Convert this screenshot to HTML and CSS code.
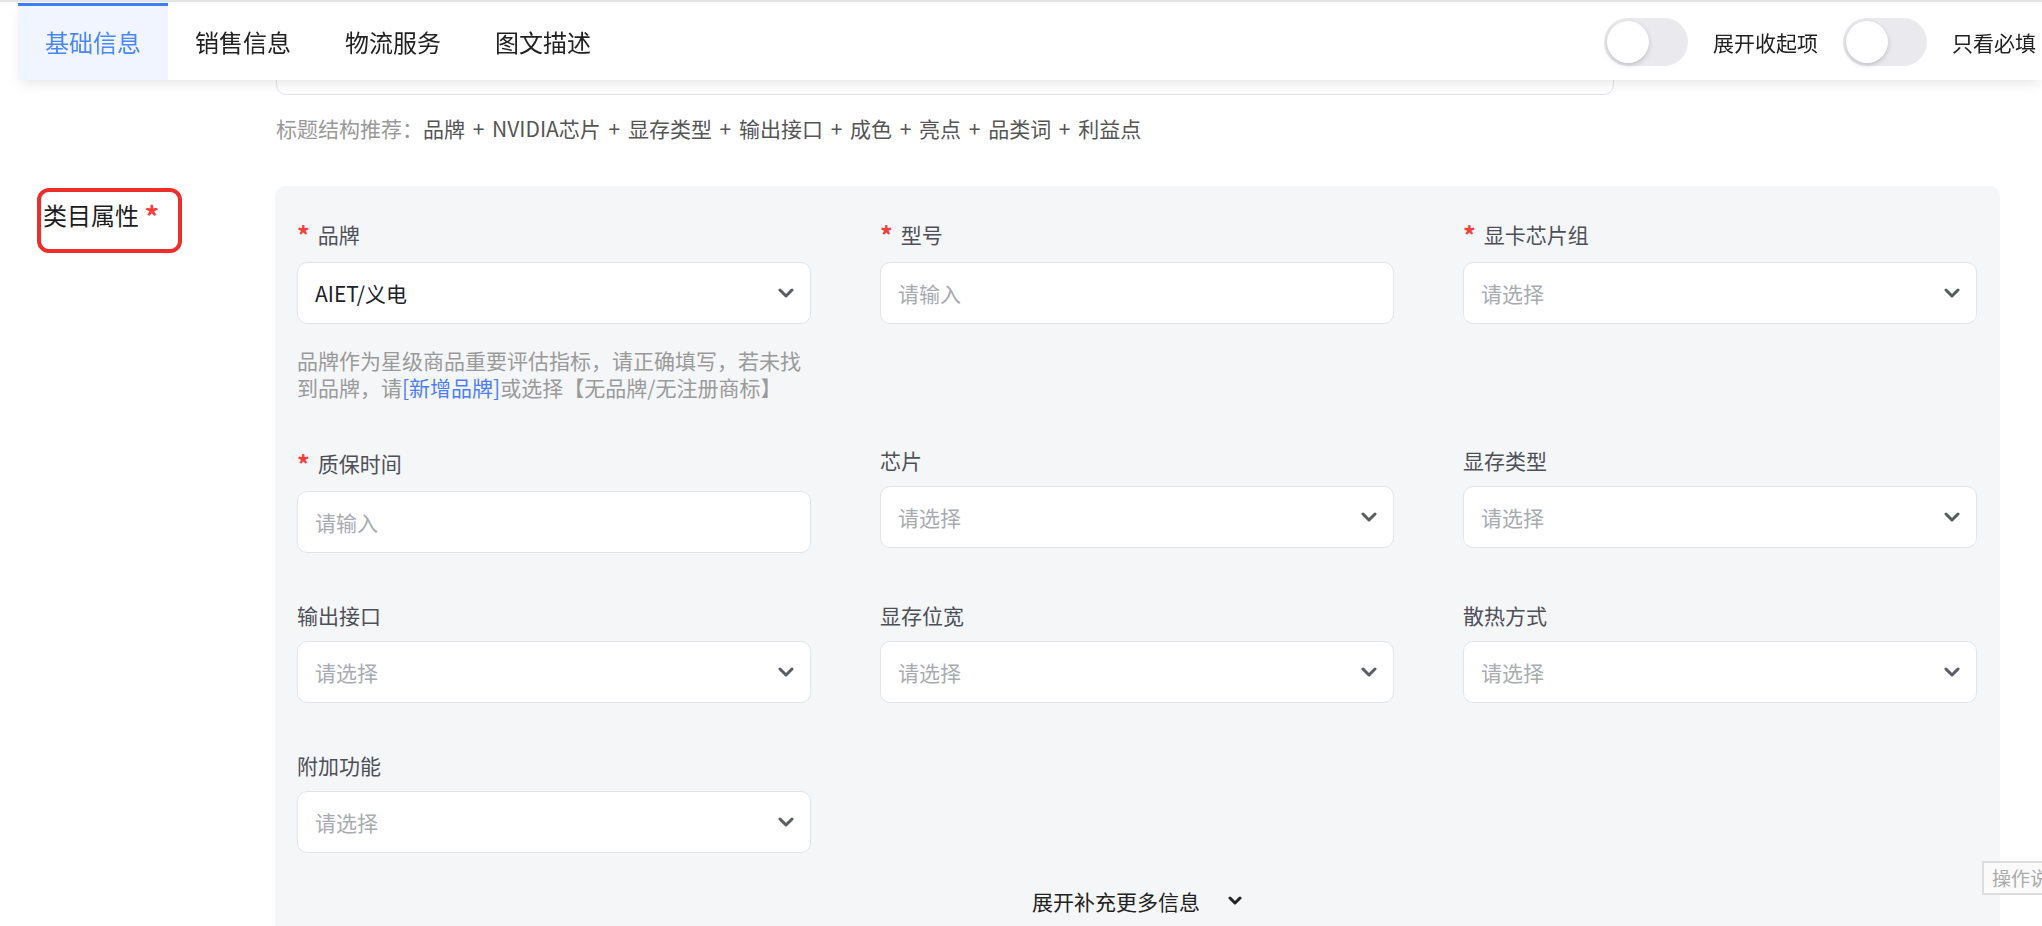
FILE: index.html
```html
<!DOCTYPE html>
<html lang="zh-CN">
<head>
    <meta charset="UTF-8">
    <meta name="viewport" content="width=device-width, initial-scale=1.0">
    <title>商品发布 - 基础信息</title>
    <link rel="stylesheet" href="styles.css">
</head>
<body>
    <!-- 顶部吸顶导航 -->
    <header class="tabbar">
        <nav class="tabs">
            <a class="tab active">基础信息</a>
            <a class="tab">销售信息</a>
            <a class="tab">物流服务</a>
            <a class="tab">图文描述</a>
        </nav>
        <div class="switches">
            <span class="switch"><span class="knob"></span></span>
            <span class="switch-text">展开收起项</span>
            <span class="switch"><span class="knob"></span></span>
            <span class="switch-text">只看必填</span>
        </div>
    </header>

    <main class="page">
        <div class="title-block">
            <div class="title-input"></div>
            <p class="title-tip"><span class="tip-lead">标题结构推荐：</span>品牌 + NVIDIA芯片 + 显存类型 + 输出接口 + 成色 + 亮点 + 品类词 + 利益点</p>
        </div>

        <section class="form-row">
            <div class="row-label">类目属性 <span class="star">*</span></div>

            <div class="attr-panel">
                <div class="attr-grid">
                    <div class="field">
                        <div class="field-label required"><span class="star">*</span>品牌</div>
                        <div class="control">
                            <span class="value">AIET/义电</span>
                            <svg class="arrow" width="16" height="10" viewBox="0 0 16 10"><path d="M2 2 L8 8 L14 2" /></svg>
                        </div>
                        <p class="field-tip">品牌作为星级商品重要评估指标，请正确填写，若未找到品牌，请<a class="link">[新增品牌]</a>或选择【无品牌/无注册商标】</p>
                    </div>
                    <div class="field">
                        <div class="field-label required"><span class="star">*</span>型号</div>
                        <div class="control">
                            <span class="placeholder">请输入</span>
                        </div>
                    </div>
                    <div class="field">
                        <div class="field-label required"><span class="star">*</span>显卡芯片组</div>
                        <div class="control">
                            <span class="placeholder">请选择</span>
                            <svg class="arrow" width="16" height="10" viewBox="0 0 16 10"><path d="M2 2 L8 8 L14 2" /></svg>
                        </div>
                    </div>

                    <div class="field">
                        <div class="field-label required"><span class="star">*</span>质保时间</div>
                        <div class="control">
                            <span class="placeholder">请输入</span>
                        </div>
                    </div>
                    <div class="field">
                        <div class="field-label">芯片</div>
                        <div class="control">
                            <span class="placeholder">请选择</span>
                            <svg class="arrow" width="16" height="10" viewBox="0 0 16 10"><path d="M2 2 L8 8 L14 2" /></svg>
                        </div>
                    </div>
                    <div class="field">
                        <div class="field-label">显存类型</div>
                        <div class="control">
                            <span class="placeholder">请选择</span>
                            <svg class="arrow" width="16" height="10" viewBox="0 0 16 10"><path d="M2 2 L8 8 L14 2" /></svg>
                        </div>
                    </div>

                    <div class="field">
                        <div class="field-label">输出接口</div>
                        <div class="control">
                            <span class="placeholder">请选择</span>
                            <svg class="arrow" width="16" height="10" viewBox="0 0 16 10"><path d="M2 2 L8 8 L14 2" /></svg>
                        </div>
                    </div>
                    <div class="field">
                        <div class="field-label">显存位宽</div>
                        <div class="control">
                            <span class="placeholder">请选择</span>
                            <svg class="arrow" width="16" height="10" viewBox="0 0 16 10"><path d="M2 2 L8 8 L14 2" /></svg>
                        </div>
                    </div>
                    <div class="field">
                        <div class="field-label">散热方式</div>
                        <div class="control">
                            <span class="placeholder">请选择</span>
                            <svg class="arrow" width="16" height="10" viewBox="0 0 16 10"><path d="M2 2 L8 8 L14 2" /></svg>
                        </div>
                    </div>

                    <div class="field">
                        <div class="field-label">附加功能</div>
                        <div class="control">
                            <span class="placeholder">请选择</span>
                            <svg class="arrow" width="16" height="10" viewBox="0 0 16 10"><path d="M2 2 L8 8 L14 2" /></svg>
                        </div>
                    </div>
                </div>

                <div class="expand-more">
                    展开补充更多信息
                    <svg class="expand-arrow" width="14" height="10" viewBox="0 0 14 10"><path d="M2 2 L7 7 L12 2" /></svg>
                </div>
            </div>
        </section>
    </main>

    <!-- 右侧悬浮入口 -->
    <div class="float-help">操作说明</div>
</body>
</html>
```

FILE: styles.css
```css
body {
    margin: 0;
    border-top: 2px solid #e4e4e6;
    background-color: #ffffff;
    font-family: "Noto Sans CJK SC", sans-serif;
    color: #1f2329;
    overflow: hidden;
}

/* 顶部导航 */
.tabbar {
    position: fixed;
    top: 3px;
    left: 18px;
    right: 0;
    height: 77px;
    display: flex;
    background: #ffffff;
    box-shadow: 0 6px 12px -3px rgba(0, 0, 0, 0.1);
    z-index: 10;
}
.tabs {
    display: flex;
}
.tab {
    padding: 0 27px;
    border-top: 3px solid transparent;
    font-size: 24px;
    line-height: 72px;
    color: #222222;
    cursor: pointer;
}
.tab.active {
    border-top-color: #3d7fff;
    background-color: #f0f5ff;
    color: #4a86ff;
}
.switches {
    margin-left: auto;
    display: flex;
    align-items: center;
    gap: 25px;
    padding-right: 6px;
}
.switch {
    width: 84px;
    height: 48px;
    box-sizing: border-box;
    padding: 0 3px;
    display: flex;
    align-items: center;
    border-radius: 24px;
    background-color: #e9e9ee;
}
.knob {
    width: 42px;
    height: 42px;
    border-radius: 50%;
    background: #ffffff;
    box-shadow: 0 2px 5px rgba(0, 0, 0, 0.18);
}
.switch-text {
    font-size: 21px;
    color: #222222;
    white-space: nowrap;
}

/* 页面主体 */
.page {
    padding-top: 31px;
}
.title-block {
    margin-left: 276px;
}
.title-input {
    width: 1338px;
    height: 62px;
    box-sizing: border-box;
    border: 1px solid #e1e2e8;
    border-radius: 10px;
}
.title-tip {
    margin: 19px 0 0;
    font-size: 21px;
    line-height: 28px;
    word-spacing: 3px;
    color: #555555;
}
.tip-lead {
    color: #999999;
}

.form-row {
    display: flex;
    margin-top: 44px;
    padding-left: 37px;
}
.row-label {
    width: 145px;
    height: 65px;
    box-sizing: border-box;
    margin: 2px 93px 0 0;
    padding: 7px 0 0 2px;
    border: 4px solid #ee2e2b;
    border-radius: 12px;
    font-size: 24px;
    line-height: 32px;
    color: #1d1d1d;
}
.star {
    color: #f53f3f;
    font-weight: bold;
    line-height: 0;
}
.row-label .star {
    font-size: 29px;
    vertical-align: -3px;
}
.field-label .star {
    margin-right: 8px;
    font-size: 25px;
    vertical-align: -2px;
}
.attr-panel {
    width: 1725px;
    box-sizing: border-box;
    padding: 30px 23px 40px 22px;
    border-radius: 10px 10px 0 0;
    background-color: #f5f6f8;
}
.attr-grid {
    display: grid;
    grid-template-columns: repeat(3, 514px);
    column-gap: 69px;
    row-gap: 47px;
    align-items: start;
}
.field-label {
    height: 30px;
    margin-bottom: 11px;
    font-size: 21px;
    line-height: 30px;
    color: #4e5058;
}
.field-label.required {
    padding-top: 3px;
    height: 31px;
    margin-bottom: 12px;
}
.control {
    height: 62px;
    box-sizing: border-box;
    display: flex;
    align-items: center;
    justify-content: space-between;
    padding: 0 16px 0 17px;
    border: 1px solid #e3e4e9;
    border-radius: 10px;
    background: #ffffff;
    font-size: 21px;
}
.value {
    color: #1d2129;
}
.placeholder {
    color: #a9abb2;
}
.arrow path {
    fill: none;
    stroke: #5a5c63;
    stroke-width: 3;
    stroke-linecap: round;
    stroke-linejoin: round;
}
.field-tip {
    margin: 23px 0 -3px;
    font-size: 21px;
    line-height: 27px;
    color: #9a9a9a;
}
.link {
    color: #4a7dff;
    cursor: pointer;
}

.expand-more {
    margin-top: 33px;
    display: flex;
    align-items: center;
    justify-content: center;
    font-size: 21px;
    line-height: 30px;
    color: #222222;
}
.expand-arrow {
    margin-left: 28px;
}
.expand-arrow path {
    fill: none;
    stroke: #222222;
    stroke-width: 3;
    stroke-linecap: round;
    stroke-linejoin: round;
}

/* 悬浮按钮 */
.float-help {
    position: fixed;
    top: 861px;
    left: 1982px;
    padding: 2px 8px;
    border: 2px solid #dddddd;
    background: #fafafa;
    font-size: 19px;
    line-height: 26px;
    color: #aaaaaa;
    white-space: nowrap;
}
```
